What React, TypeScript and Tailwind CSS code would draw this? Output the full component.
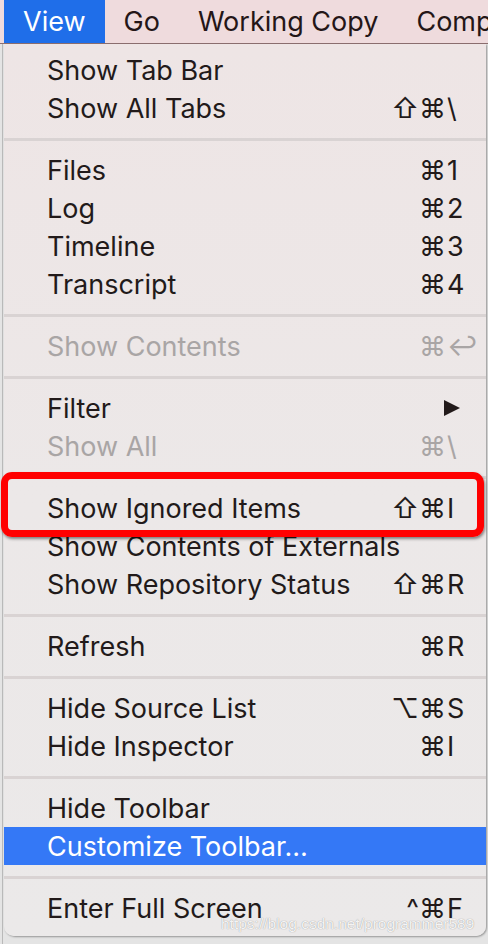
type Row =
  | { sep: true }
  | {
      sep?: false;
      label: string;
      mods?: string;
      keyChar?: string;
      disabled?: boolean;
      arrow?: boolean;
      selected?: boolean;
    };

const rows: Row[] = [
  { label: "Show Tab Bar" },
  { label: "Show All Tabs", mods: "⇧⌘", keyChar: "\\" },
  { sep: true },
  { label: "Files", mods: "⌘", keyChar: "1" },
  { label: "Log", mods: "⌘", keyChar: "2" },
  { label: "Timeline", mods: "⌘", keyChar: "3" },
  { label: "Transcript", mods: "⌘", keyChar: "4" },
  { sep: true },
  { label: "Show Contents", mods: "⌘", keyChar: "↩", disabled: true },
  { sep: true },
  { label: "Filter", arrow: true },
  { label: "Show All", mods: "⌘", keyChar: "\\", disabled: true },
  { sep: true },
  { label: "Show Ignored Items", mods: "⇧⌘", keyChar: "I" },
  { label: "Show Contents of Externals" },
  { label: "Show Repository Status", mods: "⇧⌘", keyChar: "R" },
  { sep: true },
  { label: "Refresh", mods: "⌘", keyChar: "R" },
  { sep: true },
  { label: "Hide Source List", mods: "⌥⌘", keyChar: "S" },
  { label: "Hide Inspector", mods: "⌘", keyChar: "I" },
  { sep: true },
  { label: "Hide Toolbar" },
  { label: "Customize Toolbar…", selected: true },
  { sep: true },
  { label: "Enter Full Screen", mods: "^⌘", keyChar: "F" },
];

const font = { fontFamily: '"Inter", "DejaVu Sans", sans-serif' };

const MenuRow = ({ row }: { row: Row }) => {
  if (row.sep) {
    return (
      <div className="h-[24px] flex items-center">
        <div className="h-[3px] w-full bg-[#d9d3d3]" />
      </div>
    );
  }
  const color = row.selected
    ? "text-white bg-[#3478f6]"
    : row.disabled
    ? "text-[#a9a5a5]"
    : "text-[#221a1a]";
  return (
    <div className={`h-[38px] flex items-center pl-[43px] ${color}`}>
      <span className="flex-1 whitespace-nowrap">{row.label}</span>
      {row.arrow && (
        <svg width="18" height="18" viewBox="0 0 18 18" className="mr-[25px]">
          <path d="M1 1 L17 9 L1 17 Z" fill="#221a1a" />
        </svg>
      )}
      {row.mods && (
        <span className="flex items-center">
          <span className="text-right text-[27px]">{row.mods}</span>
          <span className="w-[40px] pl-[1px] text-left">{row.keyChar}</span>
        </span>
      )}
    </div>
  );
};

export default function App() {
  return (
    <div
      className="relative w-[488px] h-[944px] overflow-hidden bg-[#e4e4e4] text-[27px] leading-none"
      style={font}
    >
      {/* menu bar */}
      <div className="h-[44px] flex items-stretch bg-[#efdbdd] border-b border-[#8d6f70] text-[#241617]">
        <div className="ml-[4px] px-[19px] flex items-center bg-[#1f6ee9] text-white">View</div>
        <div className="px-[19px] flex items-center">Go</div>
        <div className="px-[19px] flex items-center whitespace-nowrap">Working Copy</div>
        <div className="pl-[19px] flex items-center whitespace-nowrap">Comp</div>
      </div>

      {/* background window edge */}
      <div className="absolute left-[2px] top-[44px] bottom-0 w-px bg-[#b9b9b9]" />

      {/* dropdown */}
      <div className="ml-[4px] w-[482px] pt-[7px] pb-[9px] rounded-b-[10px] bg-gradient-to-b from-[#eee5e5] via-[#ece8e8] to-[#ebe9e9] shadow-[1px_1px_2px_rgba(0,0,0,0.35)]">
        {rows.map((r, i) => (
          <MenuRow key={i} row={r} />
        ))}
      </div>

      {/* red annotation box */}
      <div className="absolute left-[1px] top-[472px] w-[483px] h-[65px] rounded-[11px] border-[7px] border-[#ff0000] shadow-[1px_2px_3px_rgba(0,0,0,0.45)]" />

      {/* watermark */}
      <div
        className="absolute left-[221px] top-[916px] text-[15.5px] leading-none text-white/90 whitespace-nowrap [text-shadow:0_0_1px_rgba(0,0,0,0.45)]"
        style={{ fontFamily: '"Liberation Sans", sans-serif' }}
      >
        https://blog.csdn.net/programmer589
      </div>
    </div>
  );
}
